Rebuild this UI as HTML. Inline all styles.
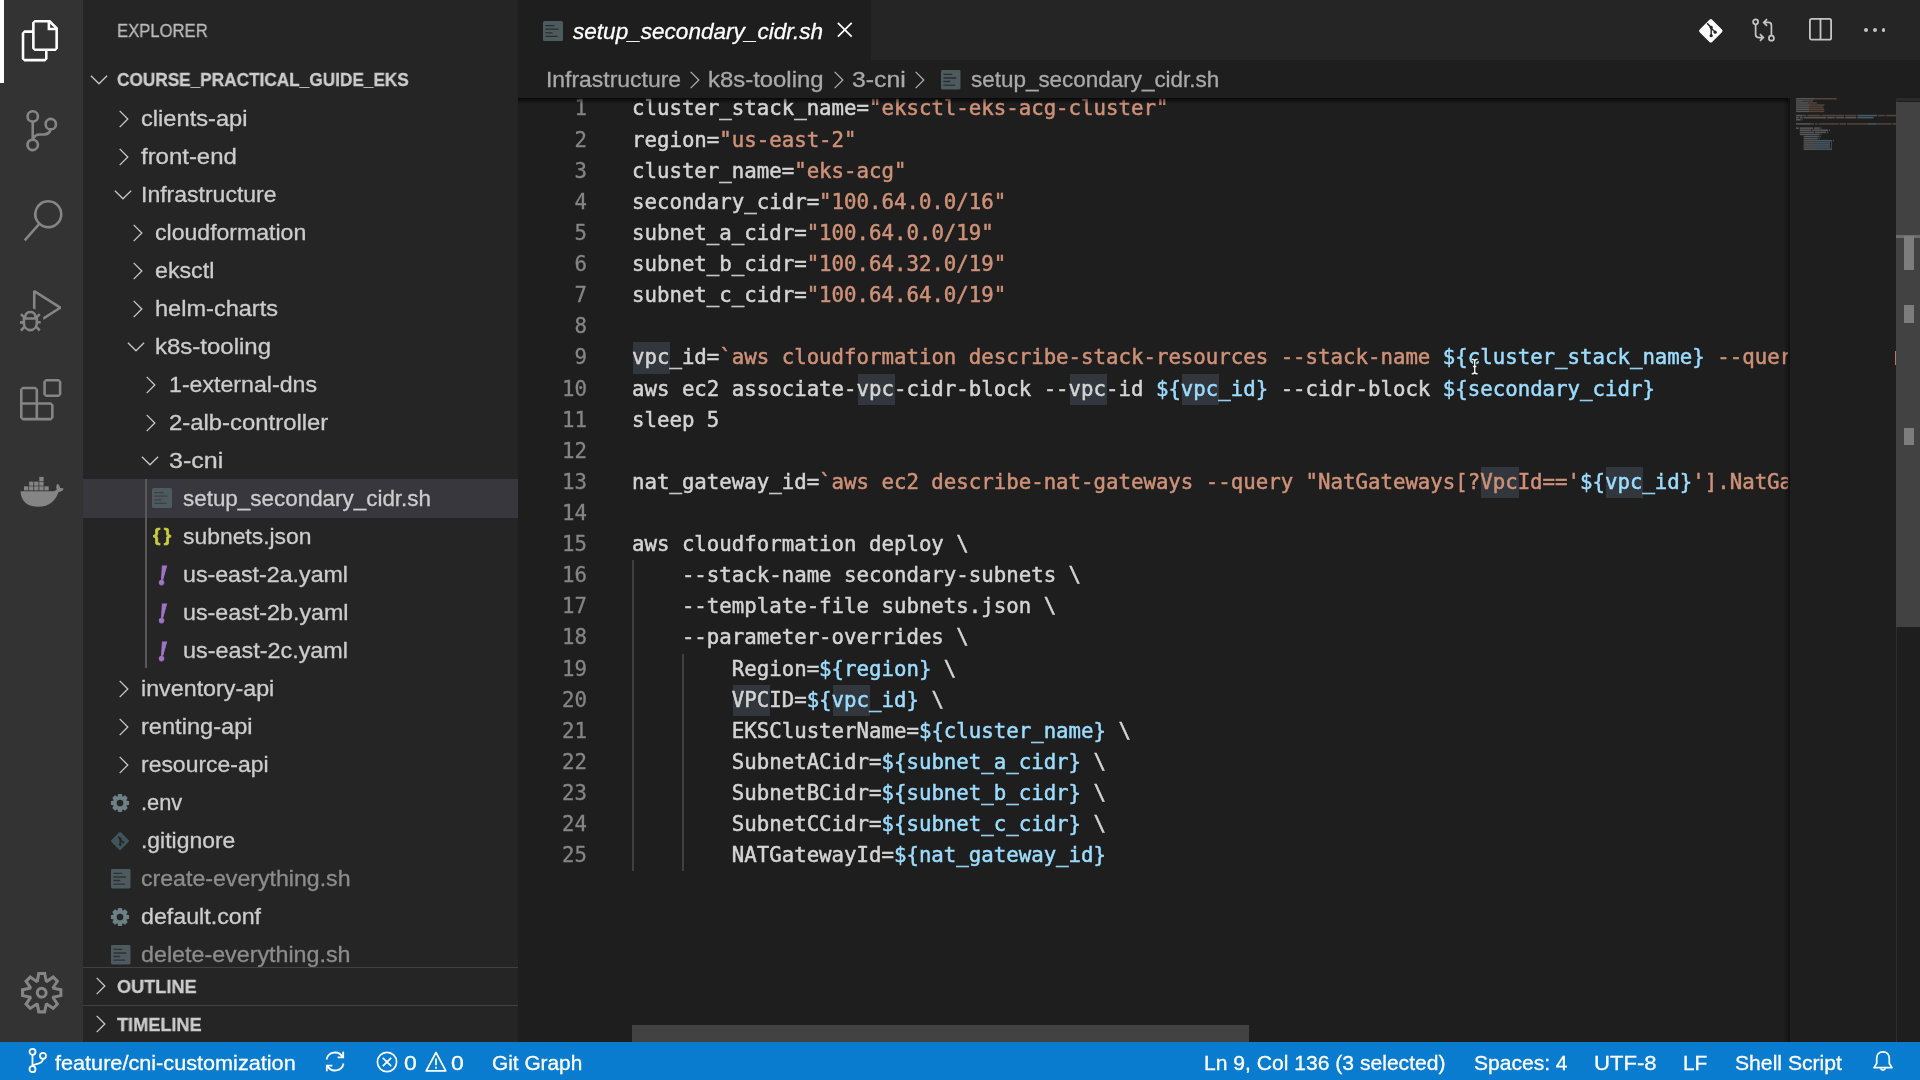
<!DOCTYPE html>
<html lang="en"><head><meta charset="utf-8"><title>setup_secondary_cidr.sh — course_practical_guide_eks</title>
<style>
html,body{margin:0;padding:0;background:#1e1e1e;overflow:hidden}
body{width:1920px;height:1080px;position:relative;font-family:"Liberation Sans",Arial,sans-serif;-webkit-font-smoothing:antialiased}
.t{will-change:transform;position:absolute;white-space:pre;transform-origin:0 50%;-webkit-text-stroke:0.3px}
.i{position:absolute;display:block;overflow:visible}
.b{position:absolute}
.code{will-change:transform;position:absolute;left:631.9px;height:31.12px;line-height:31.12px;-webkit-text-stroke:0.5px;white-space:pre;font-family:"DejaVu Sans Mono","Liberation Mono",monospace;font-size:20.72px;color:#d4d4d4}
.ln{will-change:transform;position:absolute;left:518px;width:69px;text-align:right;height:31.12px;line-height:31.12px;-webkit-text-stroke:0.3px;font-family:"DejaVu Sans Mono","Liberation Mono",monospace;font-size:20.72px;color:#858585}
.s{color:#ce9178}.v{color:#9cdcfe}
.h{background:#32373e}
</style></head><body>

<div class="b" style="left:0;top:0;width:83px;height:1042px;background:#333333"></div>
<div class="b" style="left:83px;top:0;width:435px;height:1042px;background:#252526"></div>
<div class="b" style="left:518px;top:0;width:1402px;height:60px;background:#252526"></div>
<div class="b" style="left:518px;top:0;width:353px;height:60px;background:#1e1e1e"></div>
<div class="b" style="left:0;top:1042px;width:1920px;height:38px;background:#0a7ccf"></div>
<div class="b" style="left:0;top:0;width:3.5px;height:83px;background:#ffffff"></div>
<svg class="i" style="left:20.30px;top:20.30px;" width="41.4" height="41.4" viewBox="0 0 24 24" fill="#ffffff"><path d="M17.5 0h-9L7 1.5V6H2.5L1 7.5v15.07L2.5 24h12.07L16 22.57V18h4.7l1.3-1.43V4.5L17.5 0zm0 2.12l2.38 2.38H17.5V2.12zm-3 20.38h-12v-15H7v9.07L8.5 18h6v4.5zm6-6h-12v-15H16V6h4.5v10.5z"/></svg>
<svg class="i" style="left:20.80px;top:110.30px;" width="41.4" height="41.4" viewBox="0 0 24 24" fill="#858585"><path d="M21.007 8.222A3.738 3.738 0 0 0 15.045 5.2a3.737 3.737 0 0 0 1.156 6.583 2.988 2.988 0 0 1-2.668 1.67h-2.99a4.456 4.456 0 0 0-2.989 1.165V7.4a3.737 3.737 0 1 0-1.494 0v9.117a3.776 3.776 0 1 0 1.816.099 2.99 2.99 0 0 1 2.668-1.667h2.99a4.484 4.484 0 0 0 4.223-3.039 3.736 3.736 0 0 0 3.25-3.687zM4.565 3.738a2.242 2.242 0 1 1 4.484 0 2.242 2.242 0 0 1-4.484 0zm4.484 16.441a2.242 2.242 0 1 1-4.484 0 2.242 2.242 0 0 1 4.484 0zm8.221-9.715a2.242 2.242 0 1 1 0-4.485 2.242 2.242 0 0 1 0 4.485z"/></svg>
<svg class="i" style="left:21.80px;top:199.80px;" width="41.4" height="41.4" viewBox="0 0 24 24" fill="#858585"><path d="M15.25 0a8.25 8.25 0 0 0-6.18 13.72L1 22.88l1.12 1 8.05-9.12A8.251 8.251 0 1 0 15.25.01V0zm0 15a6.75 6.75 0 1 1 0-13.5 6.75 6.75 0 0 1 0 13.5z"/></svg>
<svg class="i" style="left:20.30px;top:290.30px;" width="41.4" height="41.4" viewBox="0 0 24 24" fill="#858585"><path d="M10.94 13.5l-1.32 1.32a3.73 3.73 0 0 0-7.24 0L1.06 13.5 0 14.56l1.72 1.72-.22.22V18H0v1.5h1.5v.08c.077.489.214.966.41 1.42L0 22.94 1.06 24l1.65-1.65A4.308 4.308 0 0 0 6 24a4.31 4.31 0 0 0 3.29-1.65L10.94 24 12 22.94 10.09 21c.198-.464.336-.951.41-1.45v-.1H12V18h-1.5v-1.5l-.22-.22L12 14.56l-1.06-1.06zM6 13.5a2.25 2.25 0 0 1 2.25 2.25h-4.5A2.25 2.25 0 0 1 6 13.5zm3 6a3.33 3.33 0 0 1-3 3 3.33 3.33 0 0 1-3-3v-2.25h6v2.25zm14.76-9.9v1.26L13.5 17.37V15.6l8.5-5.37L9 2v9.46a5.07 5.07 0 0 0-1.5-.72V.63L8.64 0l15.12 9.6z"/></svg>
<svg class="i" style="left:20.30px;top:379.30px;" width="41.4" height="41.4" viewBox="0 0 24 24" fill="#858585"><path d="M13.5 1.5L15 0h7.5L24 1.5V9l-1.5 1.5H15L13.5 9V1.5zm1.5 0V9h7.5V1.5H15zM0 15V6l1.5-1.5H9L10.5 6v7.5H18l1.5 1.5v7.5L18 24H1.5L0 22.5V15zm9-1.5V6H1.5v7.5H9zM9 15H1.5v7.5H9V15zm1.5 7.5H18V15h-7.5v7.5z"/></svg>
<svg class="i" style="left:20.80px;top:972.30px;" width="41.4" height="41.4" viewBox="0 0 24 24" fill="#858585"><path d="M19.85 8.75l4.15.83v4.84l-4.15.83 2.35 3.52-3.43 3.43-3.52-2.35-.83 4.15H9.58l-.83-4.15-3.52 2.35-3.43-3.43 2.35-3.52L0 14.42V9.58l4.15-.83L1.8 5.23 5.23 1.8l3.52 2.35L9.58 0h4.84l.83 4.15 3.52-2.35 3.43 3.43-2.35 3.52zm-1.57 5.07l4-.81v-2l-4-.81-.54-1.3 2.29-3.43-1.43-1.43-3.43 2.29-1.3-.54-.81-4h-2l-.81 4-1.3.54-3.43-2.29-1.43 1.43L6.38 8.9l-.54 1.3-4 .81v2l4 .81.54 1.3-2.29 3.43 1.43 1.43 3.43-2.29 1.3.54.81 4h2l.81-4 1.3-.54 3.43 2.29 1.43-1.43-2.29-3.43.54-1.3zm-8.186-4.672A3.43 3.43 0 0 1 12 8.57 3.44 3.44 0 0 1 15.43 12a3.43 3.43 0 1 1-5.336-2.852zm.956 4.274c.281.188.612.288.95.288A1.7 1.7 0 0 0 13.71 12a1.71 1.71 0 1 0-2.66 1.422z"/></svg>
<svg class="i" style="left:19px;top:474px" width="46" height="34" viewBox="0 0 46 34" fill="#858585">
<path d="M1.500 17.200h32c1.800 0 3.300-.6 4.300-1.500-.9-1.800-.7-4.200.6-5.900 1.600 1 2.600 2.700 2.800 4.400 1.300-.3 2.700-.1 3.500.5-.9 2.200-2.900 3.100-5.200 3.200C37 25.800 30.500 32.800 19.300 32.800 8.800 32.800 2 27.600 1.500 17.200z"/>
<rect x="5.0" y="12.3" width="4.3" height="4.1"/><rect x="10.1" y="12.3" width="4.3" height="4.1"/><rect x="15.2" y="12.3" width="4.3" height="4.1"/><rect x="20.3" y="12.3" width="4.3" height="4.1"/><rect x="25.4" y="12.3" width="4.3" height="4.1"/><rect x="10.1" y="7.6" width="4.3" height="4.1"/><rect x="15.2" y="7.6" width="4.3" height="4.1"/><rect x="20.3" y="7.6" width="4.3" height="4.1"/><rect x="20.3" y="2.9" width="4.3" height="4.1"/></svg>
<div class="t" style="left:116.80px;top:18.10px;font-size:19px;line-height:26.6px;color:#bbbbbb;transform:scaleX(0.8774);">EXPLORER</div>
<svg class="i" style="left:85.00px;top:65.50px" width="28" height="28" viewBox="-14 -14 28 28" fill="none" stroke="#c5c5c5" stroke-width="1.35"><path transform="scale(1.725)" vector-effect="non-scaling-stroke" d="M-4.7 -2.5L0 2.2L4.7 -2.5"/></svg>
<div class="t" style="left:116.80px;top:67.10px;font-size:19px;line-height:26.6px;color:#cccccc;font-weight:bold;transform:scaleX(0.9062);">COURSE_PRACTICAL_GUIDE_EKS</div>
<div class="b" style="left:83px;top:479px;width:435px;height:38.5px;background:#37373d"></div>
<div class="b" style="left:145px;top:479px;width:1.7px;height:189px;background:#585858"></div>
<div class="b" style="left:83px;top:98px;width:435px;height:869px;overflow:hidden"><div class="b" style="left:-83px;top:-98px;width:1px;height:1px">
<svg class="i" style="left:110.20px;top:104.70px" width="28" height="28" viewBox="-14 -14 28 28" fill="none" stroke="#c5c5c5" stroke-width="1.35"><path transform="scale(1.725)" vector-effect="non-scaling-stroke" d="M-2.5 -4.7L2.2 0L-2.5 4.7"/></svg>
<div class="t" style="left:141.05px;top:104.18px;font-size:21.6px;line-height:30.24px;color:#cccccc;transform:scaleX(1.0958);">clients-api</div>
<svg class="i" style="left:110.20px;top:142.70px" width="28" height="28" viewBox="-14 -14 28 28" fill="none" stroke="#c5c5c5" stroke-width="1.35"><path transform="scale(1.725)" vector-effect="non-scaling-stroke" d="M-2.5 -4.7L2.2 0L-2.5 4.7"/></svg>
<div class="t" style="left:141.05px;top:142.18px;font-size:21.6px;line-height:30.24px;color:#cccccc;transform:scaleX(1.1082);">front-end</div>
<svg class="i" style="left:108.80px;top:180.80px" width="28" height="28" viewBox="-14 -14 28 28" fill="none" stroke="#c5c5c5" stroke-width="1.35"><path transform="scale(1.725)" vector-effect="non-scaling-stroke" d="M-4.7 -2.5L0 2.2L4.7 -2.5"/></svg>
<div class="t" style="left:141.05px;top:180.18px;font-size:21.6px;line-height:30.24px;color:#cccccc;transform:scaleX(1.0653);">Infrastructure</div>
<svg class="i" style="left:123.60px;top:218.70px" width="28" height="28" viewBox="-14 -14 28 28" fill="none" stroke="#c5c5c5" stroke-width="1.35"><path transform="scale(1.725)" vector-effect="non-scaling-stroke" d="M-2.5 -4.7L2.2 0L-2.5 4.7"/></svg>
<div class="t" style="left:155.05px;top:218.18px;font-size:21.6px;line-height:30.24px;color:#cccccc;transform:scaleX(1.0680);">cloudformation</div>
<svg class="i" style="left:123.60px;top:256.70px" width="28" height="28" viewBox="-14 -14 28 28" fill="none" stroke="#c5c5c5" stroke-width="1.35"><path transform="scale(1.725)" vector-effect="non-scaling-stroke" d="M-2.5 -4.7L2.2 0L-2.5 4.7"/></svg>
<div class="t" style="left:155.05px;top:256.18px;font-size:21.6px;line-height:30.24px;color:#cccccc;transform:scaleX(1.0740);">eksctl</div>
<svg class="i" style="left:123.60px;top:294.70px" width="28" height="28" viewBox="-14 -14 28 28" fill="none" stroke="#c5c5c5" stroke-width="1.35"><path transform="scale(1.725)" vector-effect="non-scaling-stroke" d="M-2.5 -4.7L2.2 0L-2.5 4.7"/></svg>
<div class="t" style="left:155.05px;top:294.18px;font-size:21.6px;line-height:30.24px;color:#cccccc;transform:scaleX(1.0906);">helm-charts</div>
<svg class="i" style="left:122.20px;top:332.80px" width="28" height="28" viewBox="-14 -14 28 28" fill="none" stroke="#c5c5c5" stroke-width="1.35"><path transform="scale(1.725)" vector-effect="non-scaling-stroke" d="M-4.7 -2.5L0 2.2L4.7 -2.5"/></svg>
<div class="t" style="left:155.05px;top:332.18px;font-size:21.6px;line-height:30.24px;color:#cccccc;transform:scaleX(1.1111);">k8s-tooling</div>
<svg class="i" style="left:137.40px;top:370.70px" width="28" height="28" viewBox="-14 -14 28 28" fill="none" stroke="#c5c5c5" stroke-width="1.35"><path transform="scale(1.725)" vector-effect="non-scaling-stroke" d="M-2.5 -4.7L2.2 0L-2.5 4.7"/></svg>
<div class="t" style="left:168.80px;top:370.18px;font-size:21.6px;line-height:30.24px;color:#cccccc;transform:scaleX(1.0724);">1-external-dns</div>
<svg class="i" style="left:137.40px;top:408.70px" width="28" height="28" viewBox="-14 -14 28 28" fill="none" stroke="#c5c5c5" stroke-width="1.35"><path transform="scale(1.725)" vector-effect="non-scaling-stroke" d="M-2.5 -4.7L2.2 0L-2.5 4.7"/></svg>
<div class="t" style="left:168.80px;top:408.18px;font-size:21.6px;line-height:30.24px;color:#cccccc;transform:scaleX(1.1059);">2-alb-controller</div>
<svg class="i" style="left:136.00px;top:446.80px" width="28" height="28" viewBox="-14 -14 28 28" fill="none" stroke="#c5c5c5" stroke-width="1.35"><path transform="scale(1.725)" vector-effect="non-scaling-stroke" d="M-4.7 -2.5L0 2.2L4.7 -2.5"/></svg>
<div class="t" style="left:168.80px;top:446.18px;font-size:21.6px;line-height:30.24px;color:#cccccc;transform:scaleX(1.1599);">3-cni</div>
<svg class="i" style="left:152.30px;top:487.90px" width="20" height="20" viewBox="0 0 20 20"><rect x="0" y="0" width="20" height="20" rx="1.5" fill="#4d5a5e"/><g stroke="#37373d" stroke-width="1.3" opacity="0.75"><path d="M2.5 4.6h9M2.5 8.2h13M2.5 11.8h7M2.5 15.4h12"/></g></svg>
<div class="t" style="left:182.55px;top:484.18px;font-size:21.6px;line-height:30.24px;color:#cccccc;transform:scaleX(1.0382);">setup_secondary_cidr.sh</div>
<div class="t" style="left:152.5px;top:521.20px;font-size:19px;line-height:28px;color:#cbcb41;font-weight:bold;letter-spacing:3.4px;-webkit-text-stroke:0.6px">{}</div>
<div class="t" style="left:182.55px;top:522.18px;font-size:21.6px;line-height:30.24px;color:#cccccc;transform:scaleX(1.0600);">subnets.json</div>
<div class="t" style="left:156.5px;top:557.90px;font-size:29px;line-height:34px;color:#a074c4;font-weight:bold;font-style:italic;-webkit-text-stroke:0.9px;font-family:'Liberation Serif',serif">!</div>
<div class="t" style="left:182.55px;top:560.18px;font-size:21.6px;line-height:30.24px;color:#cccccc;transform:scaleX(1.0742);">us-east-2a.yaml</div>
<div class="t" style="left:156.5px;top:595.90px;font-size:29px;line-height:34px;color:#a074c4;font-weight:bold;font-style:italic;-webkit-text-stroke:0.9px;font-family:'Liberation Serif',serif">!</div>
<div class="t" style="left:182.55px;top:598.18px;font-size:21.6px;line-height:30.24px;color:#cccccc;transform:scaleX(1.0775);">us-east-2b.yaml</div>
<div class="t" style="left:156.5px;top:633.90px;font-size:29px;line-height:34px;color:#a074c4;font-weight:bold;font-style:italic;-webkit-text-stroke:0.9px;font-family:'Liberation Serif',serif">!</div>
<div class="t" style="left:182.55px;top:636.18px;font-size:21.6px;line-height:30.24px;color:#cccccc;transform:scaleX(1.0828);">us-east-2c.yaml</div>
<svg class="i" style="left:110.20px;top:674.70px" width="28" height="28" viewBox="-14 -14 28 28" fill="none" stroke="#c5c5c5" stroke-width="1.35"><path transform="scale(1.725)" vector-effect="non-scaling-stroke" d="M-2.5 -4.7L2.2 0L-2.5 4.7"/></svg>
<div class="t" style="left:141.05px;top:674.18px;font-size:21.6px;line-height:30.24px;color:#cccccc;transform:scaleX(1.0780);">inventory-api</div>
<svg class="i" style="left:110.20px;top:712.70px" width="28" height="28" viewBox="-14 -14 28 28" fill="none" stroke="#c5c5c5" stroke-width="1.35"><path transform="scale(1.725)" vector-effect="non-scaling-stroke" d="M-2.5 -4.7L2.2 0L-2.5 4.7"/></svg>
<div class="t" style="left:141.05px;top:712.18px;font-size:21.6px;line-height:30.24px;color:#cccccc;transform:scaleX(1.0931);">renting-api</div>
<svg class="i" style="left:110.20px;top:750.70px" width="28" height="28" viewBox="-14 -14 28 28" fill="none" stroke="#c5c5c5" stroke-width="1.35"><path transform="scale(1.725)" vector-effect="non-scaling-stroke" d="M-2.5 -4.7L2.2 0L-2.5 4.7"/></svg>
<div class="t" style="left:141.05px;top:750.18px;font-size:21.6px;line-height:30.24px;color:#cccccc;transform:scaleX(1.0625);">resource-api</div>
<svg class="i" style="left:110.30px;top:792.50px" width="20" height="20" viewBox="-0.8 -0.8 21.6 21.6"><polygon points="19.80,8.01 19.80,11.99 16.84,12.81 16.83,12.85 18.33,15.53 15.53,18.33 12.85,16.83 12.81,16.84 11.99,19.80 8.01,19.80 7.19,16.84 7.15,16.83 4.47,18.33 1.67,15.53 3.17,12.85 3.16,12.81 0.20,11.99 0.20,8.01 3.16,7.19 3.17,7.15 1.67,4.47 4.47,1.67 7.15,3.17 7.19,3.16 8.01,0.20 11.99,0.20 12.81,3.16 12.85,3.17 15.53,1.67 18.33,4.47 16.83,7.15 16.84,7.19" fill="#6d8086"/><circle cx="10" cy="10" r="3.6" fill="#252526"/></svg>
<div class="t" style="left:140.50px;top:788.18px;font-size:21.6px;line-height:30.24px;color:#cccccc;transform:scaleX(1.0117);">.env</div>
<svg class="i" style="left:110.30px;top:830.50px" width="20" height="20" viewBox="0 0 20 20"><rect x="3.2" y="3.2" width="13.6" height="13.6" rx="1.5" transform="rotate(45 10 10)" fill="#41535b"/><g stroke="#252526" stroke-width="1.3" fill="none"><path d="M8 5.5l2.2 2.2v6M10.2 8.5l2.6 2.6"/></g><circle cx="10.2" cy="13.6" r="1.3" fill="#252526"/><circle cx="12.9" cy="11.2" r="1.3" fill="#252526"/><circle cx="10.2" cy="7.7" r="1.3" fill="#252526"/></svg>
<div class="t" style="left:140.50px;top:826.18px;font-size:21.6px;line-height:30.24px;color:#cccccc;transform:scaleX(1.0613);">.gitignore</div>
<svg class="i" style="left:110.50px;top:868.70px" width="19.5" height="19.5" viewBox="0 0 20 20"><rect x="0" y="0" width="20" height="20" rx="1.5" fill="#4d5a5e"/><g stroke="#252526" stroke-width="1.3" opacity="0.75"><path d="M2.5 4.6h9M2.5 8.2h13M2.5 11.8h7M2.5 15.4h12"/></g></svg>
<div class="t" style="left:141.05px;top:864.18px;font-size:21.6px;line-height:30.24px;color:#8c8c8c;transform:scaleX(1.0709);">create-everything.sh</div>
<svg class="i" style="left:110.30px;top:906.50px" width="20" height="20" viewBox="-0.8 -0.8 21.6 21.6"><polygon points="19.80,8.01 19.80,11.99 16.84,12.81 16.83,12.85 18.33,15.53 15.53,18.33 12.85,16.83 12.81,16.84 11.99,19.80 8.01,19.80 7.19,16.84 7.15,16.83 4.47,18.33 1.67,15.53 3.17,12.85 3.16,12.81 0.20,11.99 0.20,8.01 3.16,7.19 3.17,7.15 1.67,4.47 4.47,1.67 7.15,3.17 7.19,3.16 8.01,0.20 11.99,0.20 12.81,3.16 12.85,3.17 15.53,1.67 18.33,4.47 16.83,7.15 16.84,7.19" fill="#6d8086"/><circle cx="10" cy="10" r="3.6" fill="#252526"/></svg>
<div class="t" style="left:141.05px;top:902.18px;font-size:21.6px;line-height:30.24px;color:#cccccc;transform:scaleX(1.0750);">default.conf</div>
<svg class="i" style="left:110.50px;top:944.70px" width="19.5" height="19.5" viewBox="0 0 20 20"><rect x="0" y="0" width="20" height="20" rx="1.5" fill="#4d5a5e"/><g stroke="#252526" stroke-width="1.3" opacity="0.75"><path d="M2.5 4.6h9M2.5 8.2h13M2.5 11.8h7M2.5 15.4h12"/></g></svg>
<div class="t" style="left:141.05px;top:940.18px;font-size:21.6px;line-height:30.24px;color:#8c8c8c;transform:scaleX(1.0774);">delete-everything.sh</div>
</div></div>
<div class="b" style="left:83px;top:967px;width:435px;height:75px;background:#252526"></div>
<div class="b" style="left:83px;top:967px;width:435px;height:1px;background:#414142"></div>
<div class="b" style="left:83px;top:1005px;width:435px;height:1px;background:#414142"></div>
<svg class="i" style="left:86.50px;top:972.30px" width="28" height="28" viewBox="-14 -14 28 28" fill="none" stroke="#c5c5c5" stroke-width="1.35"><path transform="scale(1.725)" vector-effect="non-scaling-stroke" d="M-2.5 -4.7L2.2 0L-2.5 4.7"/></svg>
<div class="t" style="left:117.30px;top:973.80px;font-size:19px;line-height:26.6px;color:#cccccc;font-weight:bold;transform:scaleX(0.9546);">OUTLINE</div>
<svg class="i" style="left:86.50px;top:1010.30px" width="28" height="28" viewBox="-14 -14 28 28" fill="none" stroke="#c5c5c5" stroke-width="1.35"><path transform="scale(1.725)" vector-effect="non-scaling-stroke" d="M-2.5 -4.7L2.2 0L-2.5 4.7"/></svg>
<div class="t" style="left:117.30px;top:1011.80px;font-size:19px;line-height:26.6px;color:#cccccc;font-weight:bold;transform:scaleX(0.9542);">TIMELINE</div>
<svg class="i" style="left:542.50px;top:20.70px" width="20" height="20" viewBox="0 0 20 20"><rect x="0" y="0" width="20" height="20" rx="1.5" fill="#4d5a5e"/><g stroke="#1e1e1e" stroke-width="1.3" opacity="0.75"><path d="M2.5 4.6h9M2.5 8.2h13M2.5 11.8h7M2.5 15.4h12"/></g></svg>
<div class="t" style="left:573.05px;top:16.68px;font-size:21.6px;line-height:30.24px;color:#ffffff;font-style:italic;transform:scaleX(1.0448);">setup_secondary_cidr.sh</div>
<svg class="i" style="left:831.00px;top:16.00px;" width="27.6" height="27.6" viewBox="0 0 16 16" fill="#ffffff"><path d="M8 8.707l3.646 3.647.708-.707L8.707 8l3.647-3.646-.707-.708L8 7.293 4.354 3.646l-.707.708L7.293 8l-3.646 3.646.707.708L8 8.707z"/></svg>
<svg class="i" style="left:1697.6px;top:18px" width="25.6" height="25.6" viewBox="0 0 27 27">
<rect x="4.2" y="4.2" width="18.6" height="18.6" rx="2" transform="rotate(45 13.5 13.5)" fill="#ffffff"/>
<g stroke="#252526" stroke-width="1.500" fill="none"><path d="M9.600 5.600l4.300 4.300v8.600M14 10.800l4 4"/></g>
<circle cx="13.9" cy="9.800" r="1.700" fill="#252526"/><circle cx="13.9" cy="18.600" r="1.700" fill="#252526"/><circle cx="18.200" cy="15" r="1.700" fill="#252526"/>
</svg>
<svg class="i" style="left:1751px;top:16.8px" width="26" height="26" viewBox="0 0 27 27" fill="none" stroke="#c5c5c5" stroke-width="1.800">
<circle cx="4.800" cy="5" r="2.600"/><circle cx="21.200" cy="22" r="2.600"/>
<path d="M4.800 7.800v10.500a3 3 0 0 0 3 3h4.500M9.300 17.800l3.500 3.500-3.500 3.500"/>
<path d="M21.200 19.200V8.700a3 3 0 0 0-3-3h-4.500M16.700 2.200l-3.500 3.500 3.500 3.500"/></svg>
<svg class="i" style="left:1809px;top:18px" width="23" height="23" viewBox="0 0 23 23" fill="none" stroke="#c5c5c5" stroke-width="1.800">
<rect x="0.900" y="0.900" width="21.200" height="20.800" rx="1.800"/><path d="M11.500 1v21"/></svg>
<div class="b" style="left:1864.4px;top:28.4px;width:3.2px;height:3.2px;border-radius:2px;background:#c5c5c5"></div>
<div class="b" style="left:1873.4px;top:28.4px;width:3.2px;height:3.2px;border-radius:2px;background:#c5c5c5"></div>
<div class="b" style="left:1882.2px;top:28.4px;width:3.2px;height:3.2px;border-radius:2px;background:#c5c5c5"></div>
<div class="t" style="left:545.90px;top:65.28px;font-size:21.6px;line-height:30.24px;color:#a9a9a9;transform:scaleX(1.0614);">Infrastructure</div>
<svg class="i" style="left:681.00px;top:65.80px" width="28" height="28" viewBox="-14 -14 28 28" fill="none" stroke="#a9a9a9" stroke-width="1.35"><path transform="scale(1.725)" vector-effect="non-scaling-stroke" d="M-2.5 -4.7L2.2 0L-2.5 4.7"/></svg>
<div class="t" style="left:708.05px;top:65.28px;font-size:21.6px;line-height:30.24px;color:#a9a9a9;transform:scaleX(1.1063);">k8s-tooling</div>
<svg class="i" style="left:824.75px;top:65.80px" width="28" height="28" viewBox="-14 -14 28 28" fill="none" stroke="#a9a9a9" stroke-width="1.35"><path transform="scale(1.725)" vector-effect="non-scaling-stroke" d="M-2.5 -4.7L2.2 0L-2.5 4.7"/></svg>
<div class="t" style="left:851.80px;top:65.28px;font-size:21.6px;line-height:30.24px;color:#a9a9a9;transform:scaleX(1.1492);">3-cni</div>
<svg class="i" style="left:906.00px;top:65.80px" width="28" height="28" viewBox="-14 -14 28 28" fill="none" stroke="#a9a9a9" stroke-width="1.35"><path transform="scale(1.725)" vector-effect="non-scaling-stroke" d="M-2.5 -4.7L2.2 0L-2.5 4.7"/></svg>
<svg class="i" style="left:941.25px;top:69.80px" width="19.5" height="19.5" viewBox="0 0 20 20"><rect x="0" y="0" width="20" height="20" rx="1.5" fill="#4d5a5e"/><g stroke="#1e1e1e" stroke-width="1.3" opacity="0.75"><path d="M2.5 4.6h9M2.5 8.2h13M2.5 11.8h7M2.5 15.4h12"/></g></svg>
<div class="t" style="left:971.30px;top:65.28px;font-size:21.6px;line-height:30.24px;color:#a9a9a9;transform:scaleX(1.0392);">setup_secondary_cidr.sh</div>
<div class="b" style="left:518px;top:98px;width:1270px;height:944px;overflow:hidden"><div class="b" style="left:-518px;top:-98px;width:1px;height:1px">
<div class="b h" style="left:633.00px;top:342.41px;width:37.42px;height:31.12px"></div>
<div class="b h" style="left:857.53px;top:373.53px;width:37.42px;height:31.12px"></div>
<div class="b h" style="left:1069.59px;top:373.53px;width:37.42px;height:31.12px"></div>
<div class="b h" style="left:1181.86px;top:373.53px;width:37.42px;height:31.12px"></div>
<div class="b h" style="left:1481.23px;top:466.89px;width:37.42px;height:31.12px"></div>
<div class="b h" style="left:1605.97px;top:466.89px;width:37.42px;height:31.12px"></div>
<div class="b h" style="left:732.79px;top:684.73px;width:37.42px;height:31.12px"></div>
<div class="b h" style="left:832.58px;top:684.73px;width:37.42px;height:31.12px"></div>
<div class="b" style="left:632.3px;top:560.25px;width:1.6px;height:311.20px;background:#404040"></div>
<div class="b" style="left:682.2px;top:653.61px;width:1.6px;height:217.84px;background:#404040"></div>
<div class="ln" style="top:93.45px">1</div>
<div class="code" style="top:93.45px">cluster_stack_name=<span class="s">&quot;eksctl-eks-acg-cluster&quot;</span></div>
<div class="ln" style="top:124.57px">2</div>
<div class="code" style="top:124.57px">region=<span class="s">&quot;us-east-2&quot;</span></div>
<div class="ln" style="top:155.69px">3</div>
<div class="code" style="top:155.69px">cluster_name=<span class="s">&quot;eks-acg&quot;</span></div>
<div class="ln" style="top:186.81px">4</div>
<div class="code" style="top:186.81px">secondary_cidr=<span class="s">&quot;100.64.0.0/16&quot;</span></div>
<div class="ln" style="top:217.93px">5</div>
<div class="code" style="top:217.93px">subnet_a_cidr=<span class="s">&quot;100.64.0.0/19&quot;</span></div>
<div class="ln" style="top:249.05px">6</div>
<div class="code" style="top:249.05px">subnet_b_cidr=<span class="s">&quot;100.64.32.0/19&quot;</span></div>
<div class="ln" style="top:280.17px">7</div>
<div class="code" style="top:280.17px">subnet_c_cidr=<span class="s">&quot;100.64.64.0/19&quot;</span></div>
<div class="ln" style="top:311.29px">8</div>
<div class="ln" style="top:342.41px">9</div>
<div class="code" style="top:342.41px">vpc_id=<span class="s">`aws cloudformation describe-stack-resources --stack-name </span><span class="v">${cluster_stack_name}</span><span class="s"> --query &quot;StackResources[?LogicalResourceId==&#x27;VPC&#x27;].PhysicalResourceId&quot; --output text`</span></div>
<div class="ln" style="top:373.53px">10</div>
<div class="code" style="top:373.53px">aws ec2 associate-vpc-cidr-block --vpc-id <span class="v">${vpc_id}</span> --cidr-block <span class="v">${secondary_cidr}</span></div>
<div class="ln" style="top:404.65px">11</div>
<div class="code" style="top:404.65px">sleep 5</div>
<div class="ln" style="top:435.77px">12</div>
<div class="ln" style="top:466.89px">13</div>
<div class="code" style="top:466.89px">nat_gateway_id=<span class="s">`aws ec2 describe-nat-gateways --query &quot;NatGateways[?VpcId==&#x27;</span><span class="v">${vpc_id}</span><span class="s">&#x27;].NatGatewayId&quot; --output text`</span></div>
<div class="ln" style="top:498.01px">14</div>
<div class="ln" style="top:529.13px">15</div>
<div class="code" style="top:529.13px">aws cloudformation deploy \</div>
<div class="ln" style="top:560.25px">16</div>
<div class="code" style="top:560.25px">    --stack-name secondary-subnets \</div>
<div class="ln" style="top:591.37px">17</div>
<div class="code" style="top:591.37px">    --template-file subnets.json \</div>
<div class="ln" style="top:622.49px">18</div>
<div class="code" style="top:622.49px">    --parameter-overrides \</div>
<div class="ln" style="top:653.61px">19</div>
<div class="code" style="top:653.61px">        Region=<span class="v">${region}</span> \</div>
<div class="ln" style="top:684.73px">20</div>
<div class="code" style="top:684.73px">        VPCID=<span class="v">${vpc_id}</span> \</div>
<div class="ln" style="top:715.85px">21</div>
<div class="code" style="top:715.85px">        EKSClusterName=<span class="v">${cluster_name}</span> \</div>
<div class="ln" style="top:746.97px">22</div>
<div class="code" style="top:746.97px">        SubnetACidr=<span class="v">${subnet_a_cidr}</span> \</div>
<div class="ln" style="top:778.09px">23</div>
<div class="code" style="top:778.09px">        SubnetBCidr=<span class="v">${subnet_b_cidr}</span> \</div>
<div class="ln" style="top:809.21px">24</div>
<div class="code" style="top:809.21px">        SubnetCCidr=<span class="v">${subnet_c_cidr}</span> \</div>
<div class="ln" style="top:840.33px">25</div>
<div class="code" style="top:840.33px">        NATGatewayId=<span class="v">${nat_gateway_id}</span></div>
</div></div>
<div class="b" style="left:518px;top:98px;width:1270px;height:6px;background:linear-gradient(#000000b0,#00000000)"></div>
<div class="b" style="left:1784px;top:98px;width:6px;height:944px;background:linear-gradient(90deg,#00000000,#00000070)"></div>
<svg class="i" style="left:1796px;top:97.5px" width="100" height="56" viewBox="0 0 100 56">
<rect x="0.0" y="0.0" width="18.0" height="1.5" fill="#d4d4d4" opacity="0.32"/>
<rect x="18.0" y="0.0" width="22.7" height="1.5" fill="#ce9178" opacity="0.32"/>
<rect x="0.0" y="2.1" width="6.6" height="1.5" fill="#d4d4d4" opacity="0.32"/>
<rect x="6.6" y="2.1" width="10.4" height="1.5" fill="#ce9178" opacity="0.32"/>
<rect x="0.0" y="4.2" width="12.3" height="1.5" fill="#d4d4d4" opacity="0.32"/>
<rect x="12.3" y="4.2" width="8.5" height="1.5" fill="#ce9178" opacity="0.32"/>
<rect x="0.0" y="6.3" width="14.2" height="1.5" fill="#d4d4d4" opacity="0.32"/>
<rect x="14.2" y="6.3" width="14.2" height="1.5" fill="#ce9178" opacity="0.32"/>
<rect x="0.0" y="8.4" width="13.2" height="1.5" fill="#d4d4d4" opacity="0.32"/>
<rect x="13.2" y="8.4" width="14.2" height="1.5" fill="#ce9178" opacity="0.32"/>
<rect x="0.0" y="10.5" width="13.2" height="1.5" fill="#d4d4d4" opacity="0.32"/>
<rect x="13.2" y="10.5" width="15.1" height="1.5" fill="#ce9178" opacity="0.32"/>
<rect x="0.0" y="12.6" width="13.2" height="1.5" fill="#d4d4d4" opacity="0.32"/>
<rect x="13.2" y="12.6" width="15.1" height="1.5" fill="#ce9178" opacity="0.32"/>
<rect x="0.0" y="16.8" width="6.6" height="1.5" fill="#d4d4d4" opacity="0.32"/>
<rect x="6.6" y="16.8" width="3.8" height="1.5" fill="#ce9178" opacity="0.32"/>
<rect x="11.3" y="16.8" width="13.2" height="1.5" fill="#ce9178" opacity="0.32"/>
<rect x="25.5" y="16.8" width="22.7" height="1.5" fill="#ce9178" opacity="0.32"/>
<rect x="49.1" y="16.8" width="11.3" height="1.5" fill="#ce9178" opacity="0.32"/>
<rect x="61.4" y="16.8" width="19.8" height="1.5" fill="#9cdcfe" opacity="0.32"/>
<rect x="82.2" y="16.8" width="6.6" height="1.5" fill="#ce9178" opacity="0.32"/>
<rect x="89.8" y="16.8" width="10.2" height="1.5" fill="#ce9178" opacity="0.32"/>
<rect x="0.0" y="18.9" width="2.8" height="1.5" fill="#d4d4d4" opacity="0.32"/>
<rect x="3.8" y="18.9" width="2.8" height="1.5" fill="#d4d4d4" opacity="0.32"/>
<rect x="7.6" y="18.9" width="22.7" height="1.5" fill="#d4d4d4" opacity="0.32"/>
<rect x="31.2" y="18.9" width="7.6" height="1.5" fill="#d4d4d4" opacity="0.32"/>
<rect x="39.7" y="18.9" width="8.5" height="1.5" fill="#9cdcfe" opacity="0.32"/>
<rect x="49.1" y="18.9" width="11.3" height="1.5" fill="#d4d4d4" opacity="0.32"/>
<rect x="61.4" y="18.9" width="16.1" height="1.5" fill="#9cdcfe" opacity="0.32"/>
<rect x="0.0" y="21.0" width="4.7" height="1.5" fill="#d4d4d4" opacity="0.32"/>
<rect x="5.7" y="21.0" width="0.9" height="1.5" fill="#d4d4d4" opacity="0.32"/>
<rect x="0.0" y="25.2" width="14.2" height="1.5" fill="#d4d4d4" opacity="0.32"/>
<rect x="14.2" y="25.2" width="3.8" height="1.5" fill="#ce9178" opacity="0.32"/>
<rect x="18.9" y="25.2" width="2.8" height="1.5" fill="#ce9178" opacity="0.32"/>
<rect x="22.7" y="25.2" width="19.8" height="1.5" fill="#ce9178" opacity="0.32"/>
<rect x="43.5" y="25.2" width="6.6" height="1.5" fill="#ce9178" opacity="0.32"/>
<rect x="51.0" y="25.2" width="20.8" height="1.5" fill="#ce9178" opacity="0.32"/>
<rect x="71.8" y="25.2" width="8.5" height="1.5" fill="#9cdcfe" opacity="0.32"/>
<rect x="80.3" y="25.2" width="15.1" height="1.5" fill="#ce9178" opacity="0.32"/>
<rect x="96.4" y="25.2" width="3.6" height="1.5" fill="#ce9178" opacity="0.32"/>
<rect x="0.0" y="29.4" width="2.8" height="1.5" fill="#d4d4d4" opacity="0.32"/>
<rect x="3.8" y="29.4" width="13.2" height="1.5" fill="#d4d4d4" opacity="0.32"/>
<rect x="18.0" y="29.4" width="5.7" height="1.5" fill="#d4d4d4" opacity="0.32"/>
<rect x="24.6" y="29.4" width="0.9" height="1.5" fill="#d4d4d4" opacity="0.32"/>
<rect x="3.8" y="31.5" width="11.3" height="1.5" fill="#d4d4d4" opacity="0.32"/>
<rect x="16.1" y="31.5" width="16.1" height="1.5" fill="#d4d4d4" opacity="0.32"/>
<rect x="33.1" y="31.5" width="0.9" height="1.5" fill="#d4d4d4" opacity="0.32"/>
<rect x="3.8" y="33.6" width="14.2" height="1.5" fill="#d4d4d4" opacity="0.32"/>
<rect x="18.9" y="33.6" width="11.3" height="1.5" fill="#d4d4d4" opacity="0.32"/>
<rect x="31.2" y="33.6" width="0.9" height="1.5" fill="#d4d4d4" opacity="0.32"/>
<rect x="3.8" y="35.7" width="19.8" height="1.5" fill="#d4d4d4" opacity="0.32"/>
<rect x="24.6" y="35.7" width="0.9" height="1.5" fill="#d4d4d4" opacity="0.32"/>
<rect x="7.6" y="37.8" width="6.6" height="1.5" fill="#d4d4d4" opacity="0.32"/>
<rect x="14.2" y="37.8" width="8.5" height="1.5" fill="#9cdcfe" opacity="0.32"/>
<rect x="23.6" y="37.8" width="0.9" height="1.5" fill="#d4d4d4" opacity="0.32"/>
<rect x="7.6" y="39.9" width="5.7" height="1.5" fill="#d4d4d4" opacity="0.32"/>
<rect x="13.2" y="39.9" width="8.5" height="1.5" fill="#9cdcfe" opacity="0.32"/>
<rect x="22.7" y="39.9" width="0.9" height="1.5" fill="#d4d4d4" opacity="0.32"/>
<rect x="7.6" y="42.0" width="14.2" height="1.5" fill="#d4d4d4" opacity="0.32"/>
<rect x="21.7" y="42.0" width="14.2" height="1.5" fill="#9cdcfe" opacity="0.32"/>
<rect x="36.9" y="42.0" width="0.9" height="1.5" fill="#d4d4d4" opacity="0.32"/>
<rect x="7.6" y="44.1" width="11.3" height="1.5" fill="#d4d4d4" opacity="0.32"/>
<rect x="18.9" y="44.1" width="15.1" height="1.5" fill="#9cdcfe" opacity="0.32"/>
<rect x="35.0" y="44.1" width="0.9" height="1.5" fill="#d4d4d4" opacity="0.32"/>
<rect x="7.6" y="46.2" width="11.3" height="1.5" fill="#d4d4d4" opacity="0.32"/>
<rect x="18.9" y="46.2" width="15.1" height="1.5" fill="#9cdcfe" opacity="0.32"/>
<rect x="35.0" y="46.2" width="0.9" height="1.5" fill="#d4d4d4" opacity="0.32"/>
<rect x="7.6" y="48.3" width="11.3" height="1.5" fill="#d4d4d4" opacity="0.32"/>
<rect x="18.9" y="48.3" width="15.1" height="1.5" fill="#9cdcfe" opacity="0.32"/>
<rect x="35.0" y="48.3" width="0.9" height="1.5" fill="#d4d4d4" opacity="0.32"/>
<rect x="7.6" y="50.4" width="12.3" height="1.5" fill="#d4d4d4" opacity="0.32"/>
<rect x="19.8" y="50.4" width="16.1" height="1.5" fill="#9cdcfe" opacity="0.32"/>
</svg>
<div class="b" style="left:1895.5px;top:98px;width:1px;height:944px;background:#2e2e2e"></div>
<div class="b" style="left:1896px;top:98px;width:24px;height:3px;background:#2b2b2b"></div>
<div class="b" style="left:1896px;top:101.5px;width:24px;height:525px;background:#424242"></div>
<div class="b" style="left:1896px;top:234.5px;width:24px;height:3px;background:#6c6c6c"></div>
<div class="b" style="left:1904px;top:236px;width:9.500px;height:34px;background:#7d7d7d"></div>
<div class="b" style="left:1904px;top:305px;width:9.500px;height:18px;background:#7d7d7d"></div>
<div class="b" style="left:1904px;top:428px;width:9.500px;height:17px;background:#7d7d7d"></div>
<div class="b" style="left:1894.500px;top:351px;width:1.500px;height:14px;background:#b07a66"></div>
<div class="b" style="left:632px;top:1025.2px;width:616.5px;height:16.8px;background:#424242"></div>
<svg class="i" style="left:1469.8px;top:358px" width="9.4" height="17.2" viewBox="0 0 11 20" fill="none">
<path d="M2 1.500c2 0 3.500.5 3.500 2.500v12c0 2-1.500 2.500-3.500 2.500M9 1.500c-2 0-3.500.5-3.500 2.500M9 18.500c-2 0-3.500-.5-3.500-2.500M3.500 10h4" stroke="#111" stroke-width="3.600"/>
<path d="M2 1.500c2 0 3.500.5 3.500 2.500v12c0 2-1.500 2.500-3.500 2.500M9 1.500c-2 0-3.500.5-3.500 2.500M9 18.500c-2 0-3.500-.5-3.500-2.500M3.500 10h4" stroke="#f0f0f0" stroke-width="1.700"/></svg>
<svg class="i" style="left:27px;top:1047px" width="21" height="27" viewBox="0 0 21 27" fill="none" stroke="#ffffff" stroke-width="1.800">
<circle cx="5.500" cy="4.800" r="3"/><circle cx="5.500" cy="22.200" r="3"/><circle cx="16" cy="8.800" r="3"/>
<path d="M5.500 7.800v11.400M16 11.800c0 4-4 5-7.500 5.500-1.800.3-3 1-3 2.500"/></svg>
<div class="t" style="left:55.00px;top:1048.52px;font-size:20.4px;line-height:28.56px;color:#ffffff;transform:scaleX(1.0619);">feature/cni-customization</div>
<svg class="i" style="left:322px;top:1050px" width="26" height="23" viewBox="0 0 26 23" fill="none" stroke="#ffffff" stroke-width="1.800">
<path d="M4.500 9.500a8.600 8.600 0 0 1 16-2.500M21.500 13.500a8.600 8.600 0 0 1-16 2.500"/>
<path d="M21.200 1.800v5.600h-5.600M4.800 21.200v-5.600h5.600"/></svg>
<svg class="i" style="left:376px;top:1050.500px" width="22" height="22" viewBox="0 0 22 22" fill="none" stroke="#ffffff" stroke-width="1.700">
<circle cx="11" cy="11" r="9.600"/><path d="M6.800 6.800l8.400 8.400M15.200 6.800l-8.400 8.400"/></svg>
<div class="t" style="left:404.30px;top:1048.52px;font-size:20.4px;line-height:28.56px;color:#ffffff;transform:scaleX(1.1283);">0</div>
<svg class="i" style="left:424.500px;top:1050.500px" width="22" height="21" viewBox="0 0 22 21" fill="none" stroke="#ffffff" stroke-width="1.700" stroke-linejoin="round">
<path d="M11 1.500l9.800 18.300H1.200z"/><path d="M11 7.500v6.800M11 15.800v2"/></svg>
<div class="t" style="left:451.30px;top:1048.52px;font-size:20.4px;line-height:28.56px;color:#ffffff;transform:scaleX(1.1283);">0</div>
<div class="t" style="left:492.00px;top:1048.52px;font-size:20.4px;line-height:28.56px;color:#ffffff;transform:scaleX(1.0212);">Git Graph</div>
<div class="t" style="left:1203.50px;top:1048.52px;font-size:20.4px;line-height:28.56px;color:#ffffff;transform:scaleX(1.0343);">Ln 9, Col 136 (3 selected)</div>
<div class="t" style="left:1474.00px;top:1048.52px;font-size:20.4px;line-height:28.56px;color:#ffffff;transform:scaleX(1.0318);">Spaces: 4</div>
<div class="t" style="left:1593.50px;top:1048.52px;font-size:20.4px;line-height:28.56px;color:#ffffff;transform:scaleX(1.0832);">UTF-8</div>
<div class="t" style="left:1683.10px;top:1048.52px;font-size:20.4px;line-height:28.56px;color:#ffffff;transform:scaleX(1.0208);">LF</div>
<div class="t" style="left:1735.30px;top:1048.52px;font-size:20.4px;line-height:28.56px;color:#ffffff;transform:scaleX(1.0371);">Shell Script</div>
<svg class="i" style="left:1871.500px;top:1050px" width="22" height="23" viewBox="0 0 22 23" fill="none" stroke="#ffffff" stroke-width="1.700" stroke-linejoin="round">
<path d="M11 1.800c-4 0-6.300 2.800-6.300 6.500v5.200L2 17.600h18l-2.700-4.100V8.300c0-3.700-2.300-6.500-6.300-6.500z"/><path d="M8.600 18.300a2.500 2.500 0 0 0 4.800 0"/></svg>
</body></html>
